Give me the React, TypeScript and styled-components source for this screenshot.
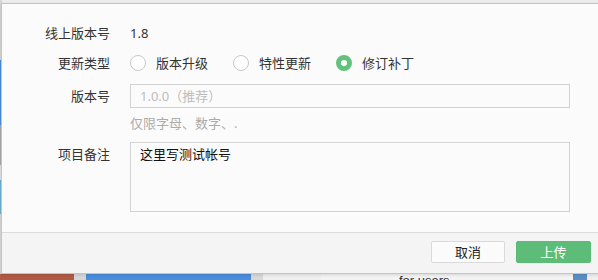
import React, { FC, useState } from "react";
import styled, { createGlobalStyle } from "styled-components";

const GlobalStyle = createGlobalStyle`
  html, body {
    margin: 0;
    padding: 0;
    background: #ededed;
  }
  body {
    font-family: "Noto Sans CJK SC", "Noto Sans", sans-serif;
    font-size: 13px;
    color: #333;
  }
`;

const Backdrop = styled.div`
  position: relative;
  width: 598px;
  height: 280px;
  overflow: hidden;
  background: #ececec;
  display: flex;
  flex-direction: column;
`;

const BackdropMain = styled.div`
  flex: 1;
  display: flex;
`;

const LeftRail = styled.div`
  width: 2px;
  display: flex;
  flex-direction: column;
  background: #d9d9d9;
`;

const RailSeg = styled.div<{ $h: number; $c: string }>`
  height: ${(p) => p.$h}px;
  background: ${(p) => p.$c};
`;

const BottomStrip = styled.div`
  height: 6px;
  display: flex;
  overflow: hidden;
`;

const StripSeg = styled.div<{ $w: number; $c: string }>`
  width: ${(p) => p.$w}px;
  flex-shrink: 0;
  background: ${(p) => p.$c};
  overflow: hidden;
  font-family: "Liberation Sans", sans-serif;
  font-size: 13px;
  line-height: 14px;
  color: #333;
  text-indent: 78px;
`;

const Dialog = styled.div`
  position: absolute;
  left: 1px;
  top: 3px;
  width: 640px;
  height: 271px;
  box-sizing: border-box;
  border: 1px solid #c4c4c4;
  background: #fbfbfb;
  display: flex;
  flex-direction: column;
  box-shadow: 0 1px 3px rgba(0, 0, 0, 0.12);
`;

const Body = styled.div`
  height: 228px;
  box-sizing: border-box;
  padding-top: 17px;
  display: flex;
  flex-direction: column;
`;

const Row = styled.div<{ $top: number; $align?: string }>`
  display: grid;
  grid-template-columns: 108px 440px;
  column-gap: 20px;
  align-items: ${(p) => p.$align || "center"};
  margin-top: ${(p) => p.$top}px;
  min-height: 24px;
`;

const Label = styled.div`
  text-align: right;
  color: #333;
  line-height: 24px;
`;

const Value = styled.div`
  line-height: 24px;
  color: #333;
  font-family: "Noto Sans", "Noto Sans CJK SC", sans-serif;
`;

const RadioGroup = styled.div`
  display: flex;
  align-items: center;
  gap: 25px;
`;

const RadioItem = styled.label`
  display: flex;
  align-items: center;
  gap: 10px;
  line-height: 24px;
  cursor: pointer;
  color: #333;
`;

const RadioDot = styled.span<{ $on: boolean }>`
  width: 16px;
  height: 16px;
  box-sizing: border-box;
  border-radius: 50%;
  background: #fff;
  border: ${(p) => (p.$on ? "5px solid #62c27d" : "1px solid #c9c9c9")};
`;

const Input = styled.input`
  height: 24px;
  box-sizing: border-box;
  border: 1px solid #d3d3d3;
  background: #fbfbfb;
  padding: 0 9px;
  font-family: "Noto Sans", "Noto Sans CJK SC", sans-serif;
  font-size: 13px;
  color: #333;
  outline: none;
  &::placeholder {
    color: #bdbdbd;
  }
`;

const Hint = styled.div`
  margin: 7px 0 0 128px;
  color: #ababab;
  line-height: 15px;
  font-size: 13px;
`;

const TextArea = styled.textarea`
  height: 70px;
  box-sizing: border-box;
  border: 1px solid #d3d3d3;
  background: #fbfbfb;
  padding: 2px 9px;
  resize: none;
  font-family: "Noto Sans CJK SC", sans-serif;
  font-size: 13px;
  line-height: 18px;
  color: #111;
  outline: none;
`;

const Footer = styled.div`
  flex: 1;
  border-top: 1px solid #dcdcdc;
  background: #f4f4f4;
  display: flex;
  align-items: flex-start;
  padding: 8px 0 0 429px;
  gap: 11px;
`;

const Button = styled.button<{ $primary?: boolean }>`
  width: ${(p) => (p.$primary ? 75 : 74)}px;
  height: 22px;
  box-sizing: border-box;
  border-radius: 2px;
  font-family: "Noto Sans CJK SC", sans-serif;
  font-size: 13px;
  line-height: 20px;
  padding: 0;
  cursor: pointer;
  border: 1px solid ${(p) => (p.$primary ? "#5bbb76" : "#dadada")};
  background: ${(p) => (p.$primary ? "#5dbd78" : "#fbfbfb")};
  color: ${(p) => (p.$primary ? "#fff" : "#222")};
`;

const types = ["版本升级", "特性更新", "修订补丁"];

const UploadDialog: FC = () => {
  const [type, setType] = useState(2);
  return (
    <Dialog>
      <Body>
        <Row $top={0}>
          <Label>线上版本号</Label>
          <Value>1.8</Value>
        </Row>
        <Row $top={6}>
          <Label>更新类型</Label>
          <RadioGroup>
            {types.map((t, i) => (
              <RadioItem key={t} onClick={() => setType(i)}>
                <RadioDot $on={type === i} />
                {t}
              </RadioItem>
            ))}
          </RadioGroup>
        </Row>
        <Row $top={9}>
          <Label>版本号</Label>
          <Input placeholder="1.0.0（推荐）" />
        </Row>
        <Hint>仅限字母、数字、.</Hint>
        <Row $top={12} $align="start">
          <Label>项目备注</Label>
          <TextArea defaultValue="这里写测试帐号" />
        </Row>
      </Body>
      <Footer>
        <Button>取消</Button>
        <Button $primary>上传</Button>
      </Footer>
    </Dialog>
  );
};

const App: FC = () => (
  <>
    <GlobalStyle />
    <Backdrop>
      <BackdropMain>
        <LeftRail>
          <RailSeg $h={60} $c="#d6d6d6" />
          <RailSeg $h={65} $c="#4a8fdc" />
          <RailSeg $h={40} $c="#a9a9a9" />
          <RailSeg $h={15} $c="#e2e2e2" />
          <RailSeg $h={34} $c="#6cb2d4" />
        </LeftRail>
      </BackdropMain>
      <BottomStrip>
        <StripSeg $w={74} $c="#b05a44" />
        <StripSeg $w={12} $c="#d6d6d6" />
        <StripSeg $w={165} $c="#4a8cdc" />
        <StripSeg $w={12} $c="#d8d8d8" />
        <StripSeg $w={58} $c="#efefef" />
        <StripSeg $w={252} $c="#f3f3f3">for users</StripSeg>
        <StripSeg $w={14} $c="#5b8dc4" />
        <StripSeg $w={11} $c="#efefef" />
      </BottomStrip>
      <UploadDialog />
    </Backdrop>
  </>
);

export default App;
